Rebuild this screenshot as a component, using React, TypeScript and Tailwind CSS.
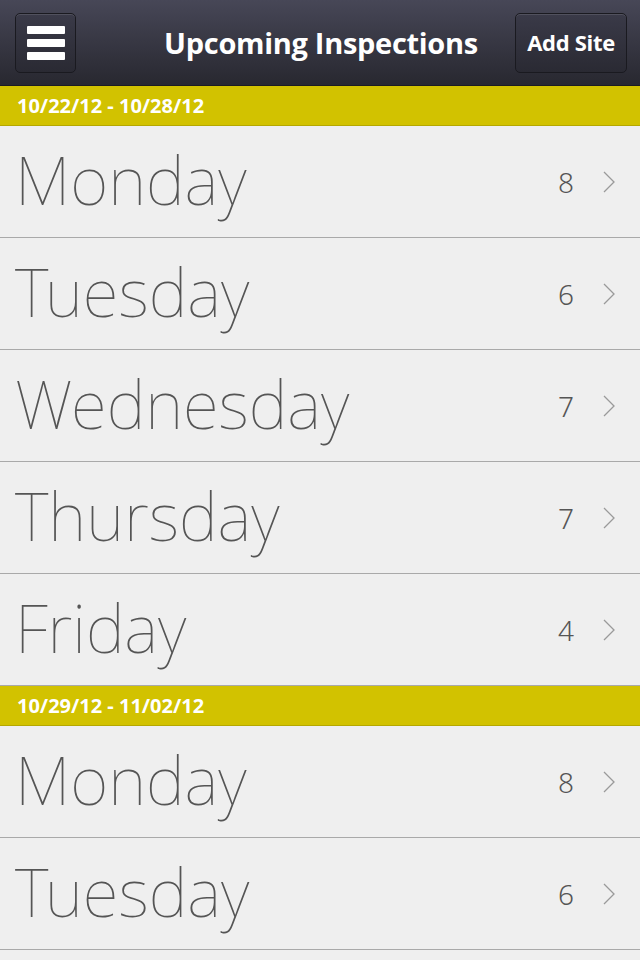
const weeks = [
  {
    range: "10/22/12 - 10/28/12",
    days: [
      { name: "Monday", count: 8 },
      { name: "Tuesday", count: 6 },
      { name: "Wednesday", count: 7 },
      { name: "Thursday", count: 7 },
      { name: "Friday", count: 4 },
    ],
  },
  {
    range: "10/29/12 - 11/02/12",
    days: [
      { name: "Monday", count: 8 },
      { name: "Tuesday", count: 6 },
    ],
  },
]

function Chevron() {
  return (
    <svg width="14" height="24" viewBox="0 0 14 24" fill="none">
      <path d="M2 2 L12 12 L2 22" stroke="#9a9a9a" strokeWidth="1.3" />
    </svg>
  )
}

export default function App() {
  return (
    <div className="w-[640px] h-[960px] overflow-hidden bg-[#efefef] font-['Open_Sans',sans-serif]">
      {/* Top bar */}
      <div className="h-[86px] grid grid-cols-[1fr_auto_1fr] items-center pl-[15px] pr-[13px] bg-gradient-to-b from-[#474757] to-[#282830] border-b border-[#1c1c22]">
        <button className="justify-self-start w-[61px] h-[60px] rounded-[5px] border border-[#1a1a20] bg-gradient-to-b from-[#3a3a48] to-[#2a2a33] shadow-[inset_0_1px_0_rgba(255,255,255,0.12)] flex flex-col items-center justify-center gap-[5px]">
          <span className="block w-[38px] h-[8px] bg-white rounded-[1px]" />
          <span className="block w-[38px] h-[8px] bg-white rounded-[1px]" />
          <span className="block w-[38px] h-[8px] bg-white rounded-[1px]" />
        </button>
        <h1 className="text-white text-[29px] font-bold tracking-[-0.3px]">Upcoming Inspections</h1>
        <button className="justify-self-end w-[112px] h-[60px] rounded-[5px] border border-[#1a1a20] bg-gradient-to-b from-[#3a3a48] to-[#2a2a33] shadow-[inset_0_1px_0_rgba(255,255,255,0.12)] text-white text-[22px] font-bold tracking-[-0.3px]">
          Add Site
        </button>
      </div>

      {weeks.map((week) => (
        <div key={week.range}>
          <div className="h-[40px] bg-[#d2c200] border-b border-[#b5a800] flex items-center px-[17px] text-white text-[20px] font-bold">
            {week.range}
          </div>
          {week.days.map((day, i) => (
            <div
              key={i}
              className="h-[112px] border-b border-[#a9a9a9] flex items-center pl-[15px] pr-[24px] font-['Noto_Sans',sans-serif]"
            >
              <span className="flex-1 text-[66px] font-thin text-[#555] leading-none pb-[6px]">{day.name}</span>
              <span className="text-[28px] font-light text-[#555] mr-[28px]">{day.count}</span>
              <Chevron />
            </div>
          ))}
        </div>
      ))}
    </div>
  )
}
